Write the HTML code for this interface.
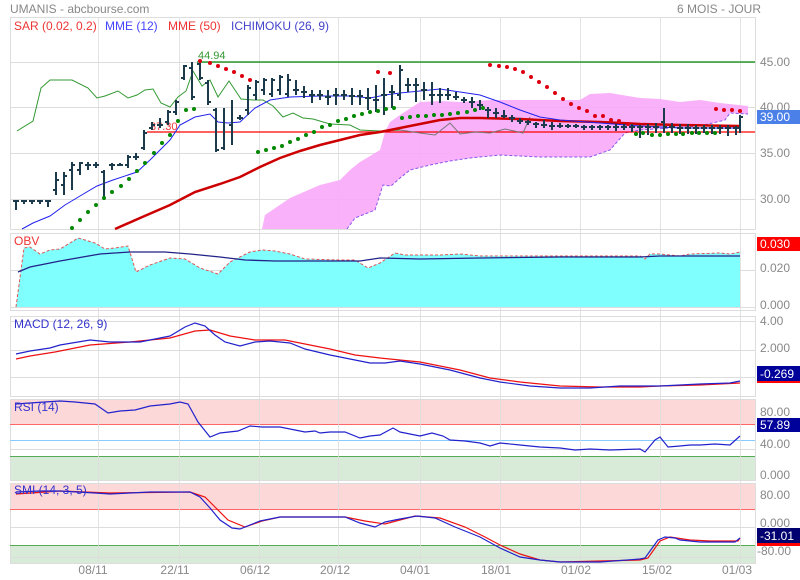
<!DOCTYPE html>
<html><head><meta charset="utf-8"><style>
body{margin:0;background:#fff;}
svg{display:block;font-family:"Liberation Sans",sans-serif;}
.ax{font-size:12px;fill:#888;}
</style></head><body>
<svg width="800" height="580" viewBox="0 0 800 580">
<rect width="800" height="580" fill="#fff"/>
<text x="10" y="13" class="ax" font-size="12">UMANIS - abcbourse.com</text>
<text x="677" y="13" class="ax">6 MOIS - JOUR</text>

<!-- panel frames & grids -->
<g fill="none" stroke="#ddd" stroke-width="1">
<rect x="10.5" y="17.5" width="745" height="212"/>
<rect x="10.5" y="233.5" width="745" height="77"/>
<rect x="10.5" y="316.5" width="745" height="80"/>
<rect x="10.5" y="399.5" width="745" height="81"/>
<rect x="10.5" y="483.5" width="745" height="80"/>
<path d="M10 62.5H755M10 107.5H755M10 153.5H755M10 199.5H755M10 270.5H755M10 307.5H755M10 321.5H755M10 350.5H755M10 377.5H755M10 449.5H755M10 527.5H755M10 557.5H755"/>
</g>
<!-- RSI / SMI bands -->
<rect x="11" y="400" width="744" height="24" fill="#fdd8d8"/>
<rect x="11" y="456" width="744" height="24" fill="#d8ead8"/>
<rect x="11" y="484" width="744" height="25" fill="#fdd8d8"/>
<rect x="11" y="545" width="744" height="18" fill="#d8ead8"/>
<g stroke="#ddd"><path d="M10 449.5H755M10 557.5H755"/></g>
<g stroke-width="1">
<path d="M10 424.5H755" stroke="#f66"/>
<path d="M10 440.5H755" stroke="#8cf"/>
<path d="M10 456.5H755" stroke="#5a5"/>
<path d="M10 509.5H755" stroke="#f66"/>
<path d="M10 545.5H755" stroke="#5a5"/>
</g>
<g stroke="#ddd" opacity="0.8">
<path d="M98.5 17V563M179.5 17V563M259.5 17V563M338.5 17V563M420.5 17V563M500.5 17V563M580.5 17V563M660.5 17V563M740.5 17V563"/>
</g>

<!-- Ichimoku cloud -->
<path d="M262 229L265 215L290 198L320 185L340 180L350 170L360 162L380 150L385 132L390 122L400 115L420 102L440 101L460 102L490 100L540 100L560 100L580 100L590 94L610 93L640 98L660 99L680 102L700 100L720 103L748 106L748 114L730 113L725 120L700 126L670 128L640 130L625 133L610 150L590 157L540 157L500 155L470 158L450 161L430 165L410 170L400 178L391 186L383 185L375 210L355 218L347 229Z" fill="#f8a8f8" opacity="0.9"/>
<path d="M347 229L355 218L375 210L383 185L391 186L400 178L410 170L430 165L450 161L470 158L500 155L540 157L590 157L610 150L625 133L640 130L670 128L700 126L725 120L730 113L748 114" fill="none" stroke="#85e" stroke-dasharray="3,2"/>

<!-- lines in main -->
<path d="M197 62H755" stroke="#080" stroke-width="1.3"/>
<path d="M147 132H755" stroke="#f00" stroke-width="1.3"/>
<text x="198" y="59" font-size="11" fill="#393">44.94</text>
<text x="150" y="130" font-size="11" fill="#e33">37.30</text>

<polyline fill="none" stroke="#393" stroke-width="1" points="17,131 33,121 41,88 50,80 58,80 72,80 88,88 97,98 105,96 118,91 128,98 137,95 145,90 153,89 161,103 170,107 178,97 186,91 193,71 202,86 210,80 218,97 229,81 241,99 253,100 263,100 273,106 283,117 293,113 303,118 313,119 330,124 350,125 360,130 380,131 400,130"/>
<polyline fill="none" stroke="#777" stroke-width="1" points="400,130 420,133 435,135 450,123 460,134 475,132 490,133 505,129 523,133 530,117"/>
<polyline fill="none" stroke="#c00" stroke-width="2.5" points="115,229 140,218 170,205 195,192 220,184 240,177 260,167 280,158 300,151 320,145 340,140 360,135 380,132 400,128 420,124 440,120 460,118 480,118 520,119 560,121 600,122 640,124 680,125 740,126"/>
<polyline fill="none" stroke="#22e" stroke-width="1" points="22,229 33,223 50,216 65,205 80,196 97,186 113,180 137,172 150,160 170,140 180,125 195,117 210,114 218,122 228,123 240,122 255,108 270,100 290,97 320,96 350,96 370,98 385,95 400,93 420,91 440,89 460,92 480,95 500,102 520,110 540,117 560,120 600,123 640,126 680,128 720,128 740,128"/>

<!-- price bars -->
<path fill="none" stroke="#1b3a4b" stroke-width="2" d="M16 200V210M13 201H16M16 201H19M24 200V204M21 201H27M32 200V204M29 201H35M40 200V204M37 201H43M48 200V207M45 201H51M56 172V195M53 190H56M56 180H59M64 172V195M61 185H64M64 176H67M72 162V190M69 170H72M72 165H75M80 162V175M77 170H80M80 163H83M88 162V170M85 165H91M96 162V168M93 165H99M104 170V200M101 172H104M112 163V170M109 165H115M120 163V166M117 165H123M128 155V168M125 165H128M128 157H131M136 153V160M133 157H139M144 130V150M141 148H144M144 133H147M152 122V130M149 128H152M152 125H155M160 118V128M157 125H163M168 110V125M165 122H168M168 112H171M176 100V115M173 112H176M176 102H179M184 65V80M181 78H184M184 66H187M192 62V100M189 68H192M192 97H195M200 62V80M197 64H200M200 78H203M208 80V105M205 83H208M208 102H211M216 108V152M216 150H219M213 110H216M224 108V150M221 148H224M232 100V145M229 125H232M240 115V120M237 118H243M248 85V115M245 110H248M248 88H251M256 80V100M253 95H256M256 82H259M264 78V95M261 90H264M264 80H267M272 78V97M269 94H272M272 80H275M280 75V95M277 90H280M280 77H283M288 74V97M285 94H288M288 80H291M296 80V95M293 90H299M304 86V98M301 92H307M312 90V103M309 95H315M320 90V100M317 95H323M328 90V105M325 97H331M336 88V105M333 95H339M344 90V100M341 95H347M352 88V105M349 96H355M360 90V105M357 96H363M368 88V110M365 98H371M376 85V112M373 100H379M384 78V115M381 95H387M392 85V108M389 92H395M400 65V100M397 95H400M400 70H403M408 78V92M405 85H411M416 78V102M413 85H419M424 82V100M421 90H427M432 82V105M429 95H435M440 88V103M437 95H443M448 88V100M445 95H451M456 92V100M453 97H459M464 97V103M461 100H467M472 97V108M469 102H475M480 100V110M477 105H483M488 107V118M485 110H491M496 108V118M493 113H499M504 110V118M501 116H507M512 115V122M509 118H515M520 118V124M517 121H523M528 120V125M525 122H531M536 122V128M533 124H539M544 120V128M541 125H547M552 122V130M549 126H555M560 123V128M557 126H563M568 124V128M565 126H571M576 124V128M573 126H579M584 125V130M581 127H587M592 125V130M589 127H595M600 125V130M597 127H603M608 125V130M605 127H611M616 124V131M613 127H619M624 124V130M621 127H627M632 124V132M629 127H635M640 125V138M637 127H643M648 124V135M645 127H651M656 123V133M653 127H659M664 108V133M661 122H664M664 127H667M672 123V133M669 127H675M680 124V134M677 128H683M688 124V134M685 128H691M696 125V134M693 128H699M704 125V133M701 128H707M712 125V134M709 128H715M720 125V134M717 128H723M728 125V136M725 128H731M736 126V135M733 128H739M740 115V133M740 117H743"/>

<!-- SAR -->
<g fill="#d01">
<circle cx="200" cy="61" r="2"/><circle cx="210" cy="63" r="2"/><circle cx="218" cy="66" r="2"/><circle cx="226" cy="69" r="2"/><circle cx="234" cy="72" r="2"/><circle cx="242" cy="76" r="2"/><circle cx="250" cy="80" r="2"/>
<circle cx="378" cy="72" r="2"/><circle cx="390" cy="73" r="2"/>
<circle cx="490" cy="65" r="2"/><circle cx="499" cy="66" r="2"/><circle cx="507" cy="67" r="2"/><circle cx="515" cy="69" r="2"/><circle cx="523" cy="72" r="2"/><circle cx="531" cy="77" r="2"/><circle cx="539" cy="82" r="2"/><circle cx="547" cy="87" r="2"/><circle cx="555" cy="93" r="2"/><circle cx="563" cy="99" r="2"/><circle cx="571" cy="104" r="2"/><circle cx="579" cy="108" r="2"/><circle cx="587" cy="111" r="2"/><circle cx="595" cy="116" r="2"/><circle cx="603" cy="116" r="2"/><circle cx="611" cy="120" r="2"/><circle cx="619" cy="121" r="2"/><circle cx="628" cy="124" r="2"/>
<circle cx="716" cy="109" r="2"/><circle cx="724" cy="110" r="2"/><circle cx="732" cy="110" r="2"/><circle cx="740" cy="111" r="2"/>
</g>
<g fill="#080">
<circle cx="72" cy="228" r="2"/><circle cx="80" cy="220" r="2"/><circle cx="88" cy="212" r="2"/><circle cx="96" cy="205" r="2"/><circle cx="104" cy="198" r="2"/><circle cx="112" cy="192" r="2"/><circle cx="121" cy="186" r="2"/><circle cx="129" cy="179" r="2"/><circle cx="137" cy="171" r="2"/><circle cx="145" cy="163" r="2"/><circle cx="154" cy="153" r="2"/><circle cx="162" cy="143" r="2"/><circle cx="170" cy="135" r="2"/><circle cx="178" cy="121" r="2"/><circle cx="186" cy="110" r="2"/><circle cx="194" cy="109" r="2"/>
<circle cx="258" cy="152" r="2"/><circle cx="266" cy="150" r="2"/><circle cx="274" cy="148" r="2"/><circle cx="282" cy="146" r="2"/><circle cx="290" cy="142" r="2"/><circle cx="298" cy="139" r="2"/><circle cx="306" cy="135" r="2"/><circle cx="314" cy="132" r="2"/><circle cx="322" cy="127" r="2"/><circle cx="330" cy="125" r="2"/><circle cx="338" cy="121" r="2"/><circle cx="346" cy="119" r="2"/><circle cx="354" cy="116" r="2"/><circle cx="362" cy="114" r="2"/><circle cx="370" cy="112" r="2"/><circle cx="378" cy="111" r="2"/><circle cx="386" cy="109" r="2"/><circle cx="394" cy="108" r="2"/>
<circle cx="402" cy="118" r="2"/><circle cx="410" cy="117" r="2"/><circle cx="418" cy="116" r="2"/><circle cx="426" cy="116" r="2"/><circle cx="434" cy="115" r="2"/><circle cx="442" cy="115" r="2"/><circle cx="450" cy="114" r="2"/><circle cx="458" cy="113" r="2"/><circle cx="467" cy="112" r="2"/><circle cx="475" cy="110" r="2"/><circle cx="483" cy="108" r="2"/>
<circle cx="636" cy="134" r="2"/><circle cx="643" cy="133" r="2"/><circle cx="652" cy="135" r="2"/><circle cx="660" cy="135" r="2"/><circle cx="668" cy="134" r="2"/><circle cx="676" cy="134" r="2"/><circle cx="683" cy="134" r="2"/><circle cx="692" cy="133" r="2"/><circle cx="699" cy="133" r="2"/><circle cx="707" cy="133" r="2"/><circle cx="715" cy="133" r="2"/>
</g>

<g font-size="12">
<text x="14" y="30" fill="#e33">SAR (0.02, 0.2)</text>
<text x="105" y="30" fill="#44f">MME (12)</text>
<text x="168" y="30" fill="#e33">MME (50)</text>
<text x="231" y="30" fill="#44c">ICHIMOKU (26, 9)</text>
</g>

<!-- OBV -->
<path d="M16 307L24 248L30 247L40 254L50 250L60 249L70 243L78 238L85 240L95 243L105 249L115 248L128 246L136 272L150 265L170 258L185 259L200 268L218 274L230 262L250 252L262 250L275 251L290 254L305 259L340 260L355 260L368 268L380 263L395 253L405 255L440 255L460 254L480 256L500 256L640 256L645 259L650 254L660 254L680 256L690 254L720 253L730 254L740 252L740 307Z" fill="#80ffff"/>
<polyline fill="none" stroke="#d55" stroke-dasharray="3,2" points="16,307 24,248 30,247 40,254 50,250 60,249 70,243 78,238 85,240 95,243 105,249 115,248 128,246 136,272 150,265 170,258 185,259 200,268 218,274 230,262 250,252 262,250 275,251 290,254 305,259 340,260 355,260 368,268 380,263 395,253 405,255 440,255 460,254 480,256 500,256 640,256 645,259 650,254 660,254 680,256 690,254 720,253 730,254 740,252"/>
<polyline fill="none" stroke="#228" stroke-width="1.3" points="18,272 30,267 60,261 100,254 130,252 165,252 190,254 220,257 245,260 275,261 360,261 380,258 420,259 480,258 560,257 640,257 660,256 700,256 740,256"/>
<text x="14" y="245" font-size="12" fill="#e33">OBV</text>

<!-- MACD -->
<polyline fill="none" stroke="#e11" stroke-width="1.2" points="16,359 30,356 55,352 90,345 130,342 150,340 170,338 195,331 210,330 230,336 255,340 285,340 300,343 330,349 355,355 380,358 420,362 460,370 490,378 520,382 560,386 600,387 640,387 660,386 700,385 740,383"/>
<polyline fill="none" stroke="#22c" stroke-width="1.2" points="16,354 30,351 50,348 60,345 90,340 110,342 140,342 170,336 185,327 195,323 205,326 215,335 225,342 240,346 255,342 270,341 290,343 305,349 330,355 355,360 370,363 385,363 400,361 420,364 450,370 480,378 500,382 530,386 560,388 590,388 620,386 660,386 700,384 730,383 740,381"/>
<text x="14" y="328" font-size="12" fill="#33c">MACD (12, 26, 9)</text>

<!-- RSI -->
<polyline fill="none" stroke="#22c" stroke-width="1.2" points="16,404 30,403 60,401 75,402 95,404 108,413 120,411 135,410 150,406 170,404 180,402 188,404 198,422 210,437 220,433 238,431 250,426 262,427 280,427 295,430 305,432 315,431 320,433 330,432 345,432 360,438 370,436 380,435 393,428 400,432 410,434 420,436 432,433 443,436 450,440 465,441 480,443 490,446 500,443 520,445 540,447 560,448 575,450 590,449 610,450 640,449 645,452 655,440 660,437 668,447 680,446 690,445 700,445 715,444 730,445 740,436"/>
<text x="14" y="411" font-size="12" fill="#33c">RSI (14)</text>

<!-- SMI -->
<polyline fill="none" stroke="#e11" stroke-width="1.2" points="16,494 60,491 110,493 190,492 205,497 215,507 228,520 245,527 262,521 280,517 345,517 365,521 385,524 415,516 440,518 465,527 485,537 500,545 520,554 540,560 560,562 640,560 648,558 660,541 670,537 690,540 710,541 738,541 740,538"/>
<polyline fill="none" stroke="#22c" stroke-width="1.2" points="16,492 40,491 60,491 95,493 110,494 130,493 150,492 190,492 200,497 210,508 220,520 232,528 240,529 260,521 280,517 290,517 320,517 345,517 360,523 375,527 385,522 400,519 417,516 435,518 455,527 480,537 500,548 520,557 540,560 560,562 600,562 640,559 645,558 658,540 665,537 675,538 680,540 700,542 720,542 735,542 740,538"/>
<text x="14" y="494" font-size="12" fill="#33c">SMI (14, 3, 5)</text>

<!-- right axis -->
<g class="ax">
<text x="760" y="66">45.00</text>
<text x="760" y="111" >40.00</text>
<text x="760" y="157">35.00</text>
<text x="760" y="203">30.00</text>
<text x="760" y="272">0.020</text>
<text x="760" y="309">0.000</text>
<text x="760" y="325">4.00</text>
<text x="760" y="352">2.000</text>
<text x="760" y="416">80.00</text>
<text x="760" y="448">40.00</text>
<text x="760" y="479">0.000</text>
<text x="760" y="499">80.00</text>
<text x="760" y="527">0.000</text>
<text x="757" y="555">-80.00</text>
</g>
<rect x="757" y="110" width="43" height="14" fill="#4a80e8"/>
<text x="760" y="121" font-size="12" fill="#fff">39.00</text>
<rect x="757" y="237" width="43" height="14" fill="#f00"/>
<text x="760" y="248" font-size="12" fill="#fff">0.030</text>
<rect x="757" y="366" width="43" height="15" fill="#00009a"/>
<rect x="757" y="381" width="43" height="2" fill="#f00"/>
<text x="760" y="378" font-size="12" fill="#fff">-0.269</text>
<rect x="757" y="418" width="43" height="14" fill="#00009a"/>
<text x="760" y="429" font-size="12" fill="#fff">57.89</text>
<rect x="757" y="528" width="43" height="15" fill="#000070"/>
<rect x="757" y="543" width="43" height="3" fill="#f00"/>
<text x="760" y="540" font-size="12" fill="#fff">-31.01</text>

<!-- x axis -->
<g class="ax" text-anchor="middle">
<text x="93" y="574">08/11</text>
<text x="175" y="574">22/11</text>
<text x="255" y="574">06/12</text>
<text x="335" y="574">20/12</text>
<text x="415" y="574">04/01</text>
<text x="496" y="574">18/01</text>
<text x="576" y="574">01/02</text>
<text x="657" y="574">15/02</text>
<text x="737" y="574">01/03</text>
</g>
</svg>
</body></html>
